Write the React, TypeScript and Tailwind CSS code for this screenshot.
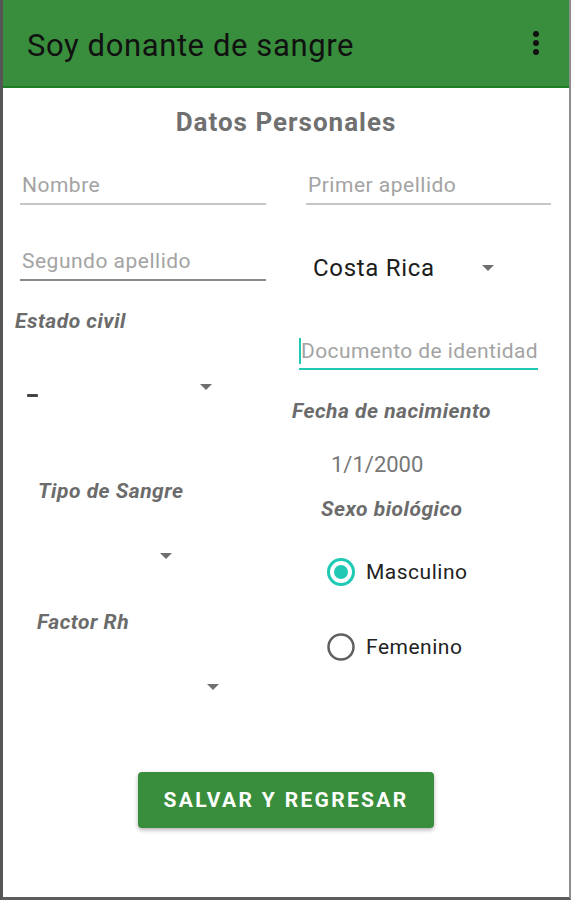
import React from 'react';

const FONT = { fontFamily: 'Roboto, "Noto Sans", Arial, sans-serif' };

function Arrow({ className = '' }: { className?: string }) {
  return (
    <svg width="12" height="6" viewBox="0 0 12 6" className={className}>
      <path d="M0 0 L12 0 L6 6 Z" fill="#6f6f6f" />
    </svg>
  );
}

function Field({ text, line, className = '' }: { text: string; line: string; className?: string }) {
  return (
    <div className={`border-b-2 pb-[6px] ${line} ${className}`}>
      <div className="pl-[2px] text-[21px] leading-[24px] tracking-[0.5px] whitespace-nowrap text-[#a3a3a3]">{text}</div>
    </div>
  );
}

function Label({ text, className = '' }: { text: string; className?: string }) {
  return (
    <div className={`text-[21px] leading-[24px] tracking-[0.5px] whitespace-nowrap font-bold italic text-[#6b6b6b] ${className}`}>
      {text}
    </div>
  );
}

function Radio({ label, checked, className = '' }: { label: string; checked?: boolean; className?: string }) {
  return (
    <div className={`flex items-center gap-[11px] h-[28px] ${className}`}>
      <svg width="28" height="28" viewBox="0 0 28 28">
        {checked ? (
          <>
            <circle cx="14" cy="14" r="12.5" fill="none" stroke="#1fc9b3" strokeWidth="3" />
            <circle cx="14" cy="14" r="7" fill="#1fc9b3" />
          </>
        ) : (
          <circle cx="14" cy="14" r="12.5" fill="none" stroke="#5f5f5f" strokeWidth="2.5" />
        )}
      </svg>
      <span className="text-[21px] leading-[24px] tracking-[0.5px] text-[#222]">{label}</span>
    </div>
  );
}

export default function App() {
  return (
    <div
      className="w-[571px] h-[900px] bg-white border-l-[3px] border-l-[#555] border-r-2 border-r-[#8c8c8c] border-b-[3px] border-b-[#5c5c5c] flex flex-col overflow-hidden"
      style={FONT}
    >
      {/* App bar */}
      <div className="h-[88px] shrink-0 bg-[#388e3c] border-b-2 border-[#1f7d24] flex items-center justify-between pl-[24px] pr-[30px]">
        <div className="mt-[6px] text-[31px] leading-[36px] tracking-[0.6px] text-[#111]">Soy donante de sangre</div>
        <div className="flex flex-col gap-[3px]">
          <span className="w-[6px] h-[6px] rounded-full bg-[#111]" />
          <span className="w-[6px] h-[6px] rounded-full bg-[#111]" />
          <span className="w-[6px] h-[6px] rounded-full bg-[#111]" />
        </div>
      </div>

      <div className="mt-[19px] h-[30px] text-center text-[26px] leading-[30px] tracking-[1px] font-bold text-[#707070]">
        Datos Personales
      </div>

      <div className="grid grid-cols-[282px_1fr]">
        {/* Left column */}
        <div className="flex flex-col">
          <Field text="Nombre" line="border-[#c6c6c6]" className="mt-[36px] ml-[17px] w-[246px]" />
          <Field text="Segundo apellido" line="border-[#8a8a8a]" className="mt-[44px] ml-[17px] w-[246px]" />
          <Label text="Estado civil" className="mt-[28px] ml-[12px]" />
          <div className="mt-[51px] h-[13px] flex items-start">
            <div className="ml-[24px] mt-[10px] w-[11px] h-[3px] rounded-[1px] bg-[#444]" />
            <Arrow className="ml-[162px]" />
          </div>
          <Label text="Tipo de Sangre" className="mt-[82px] ml-[35px]" />
          <Arrow className="mt-[50px] ml-[157px]" />
          <Label text="Factor Rh" className="mt-[51px] ml-[34px]" />
          <Arrow className="mt-[50px] ml-[204px]" />
        </div>

        {/* Right column */}
        <div className="flex flex-col">
          <Field text="Primer apellido" line="border-[#c6c6c6]" className="mt-[36px] ml-[21px] w-[245px]" />
          <div className="mt-[49px] ml-[28px] w-[181px] h-[28px] flex items-center justify-between">
            <span className="text-[24px] leading-[28px] tracking-[0.7px] text-[#1c1c1c]">Costa Rica</span>
            <Arrow />
          </div>
          <div className="mt-[56px] ml-[14px] w-[239px] border-b-2 border-[#1fc9b3] pb-[4px] flex items-center">
            <div className="w-[2px] h-[26px] shrink-0 bg-[#1fc9b3]" />
            <span className="whitespace-nowrap text-[21px] leading-[24px] tracking-[0.4px] text-[#a3a3a3]">
              Documento de identidad
            </span>
          </div>
          <Label text="Fecha de nacimiento" className="mt-[29px] ml-[7px]" />
          <div className="mt-[29px] ml-[46px] text-[22px] leading-[26px] text-[#777]">1/1/2000</div>
          <Label text="Sexo biológico" className="mt-[19px] ml-[36px]" />
          <Radio label="Masculino" checked className="mt-[37px] ml-[42px]" />
          <Radio label="Femenino" className="mt-[47px] ml-[42px]" />
        </div>
      </div>

      <button className="mt-[82px] mx-auto w-[296px] h-[56px] pt-[2px] rounded-[4px] bg-[#388e3c] text-white text-[21px] font-bold tracking-[0.11em] shadow-[0_2px_4px_rgba(0,0,0,0.3)]">
        SALVAR Y REGRESAR
      </button>
    </div>
  );
}
